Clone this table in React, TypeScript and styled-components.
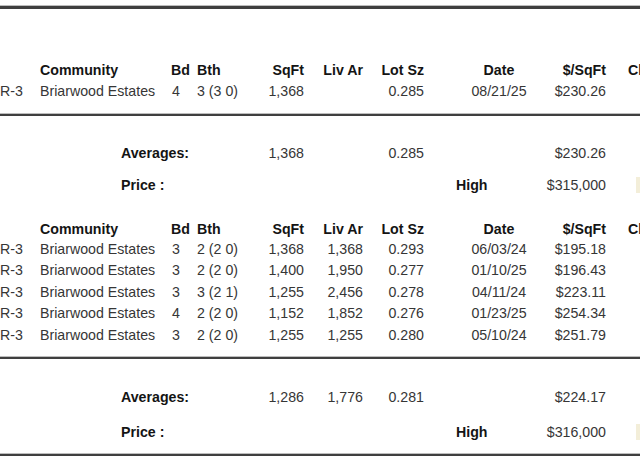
import React from "react";
import styled, { createGlobalStyle } from "styled-components";

const Global = createGlobalStyle`
  html, body { margin: 0; padding: 0; background: #fff; overflow: hidden; }
  body { width: 640px; height: 460px; font-family: "Liberation Sans", Arial, sans-serif; }
`;

const Page = styled.div`
  width: 640px;
  height: 460px;
  overflow: hidden;
  padding-top: 6px;
  box-sizing: border-box;
`;

const Section = styled.section<{ $pt: number; $pb: number; $border: number }>`
  border-top: ${(p) => p.$border}px solid #3f3f3f;
  padding-top: ${(p) => p.$pt}px;
  padding-bottom: ${(p) => p.$pb}px;
  box-shadow: 0 -1px 0 #bdbdbd;
`;

const Row = styled.div<{ $h: number; $mt?: number }>`
  display: grid;
  grid-template-columns: 40px 131px 26px 57px 50px 59px 61px 150px 32px 1fr;
  height: ${(p) => p.$h}px;
  align-items: center;
  margin-top: ${(p) => p.$mt ?? 0}px;
  font-size: 14.2px;
  color: #333;
  white-space: nowrap;
`;

const Cell = styled.div<{ $align?: "start" | "end" | "center"; $bold?: boolean; $col?: string; $pl?: number }>`
  justify-self: ${(p) => p.$align ?? "start"};
  grid-column: ${(p) => p.$col ?? "auto"};
  font-weight: ${(p) => (p.$bold ? 700 : 400)};
  color: ${(p) => (p.$bold ? "#141414" : "#363636")};
  padding-left: ${(p) => p.$pl ?? 0}px;
`;

const Tab = styled.div`
  grid-column: 10;
  justify-self: start;
  margin-left: 30px;
  width: 8px;
  height: 16px;
  background: #f3eed9;
`;

type Rec = {
  zone: string;
  bd: string;
  bth: string;
  sqft: string;
  liv: string;
  lot: string;
  date: string;
  pps: string;
};

const Header = ({ h }: { h: number }) => (
  <Row $h={h}>
    <Cell />
    <Cell $bold>Community</Cell>
    <Cell $bold>Bd</Cell>
    <Cell $bold>Bth</Cell>
    <Cell $bold $align="end">SqFt</Cell>
    <Cell $bold $align="end">Liv Ar</Cell>
    <Cell $bold $align="end">Lot Sz</Cell>
    <Cell $bold $align="center">Date</Cell>
    <Cell $bold $align="end">$/SqFt</Cell>
    <Cell $bold $pl={22}>Cl</Cell>
  </Row>
);

const DataRow = ({ r, h }: { r: Rec; h: number }) => (
  <Row $h={h}>
    <Cell>{r.zone}</Cell>
    <Cell>Briarwood Estates</Cell>
    <Cell $pl={1}>{r.bd}</Cell>
    <Cell>{r.bth}</Cell>
    <Cell $align="end">{r.sqft}</Cell>
    <Cell $align="end">{r.liv}</Cell>
    <Cell $align="end">{r.lot}</Cell>
    <Cell $align="center">{r.date}</Cell>
    <Cell $align="end">{r.pps}</Cell>
    <Cell />
  </Row>
);

const Averages = ({ sqft, liv, lot, pps }: { sqft: string; liv: string; lot: string; pps: string }) => (
  <Row $h={22}>
    <Cell />
    <Cell $bold $col="2 / 5" $pl={81}>Averages:</Cell>
    <Cell $align="end">{sqft}</Cell>
    <Cell $align="end">{liv}</Cell>
    <Cell $align="end">{lot}</Cell>
    <Cell />
    <Cell $align="end">{pps}</Cell>
  </Row>
);

const Price = ({ high, mt }: { high: string; mt: number }) => (
  <Row $h={22} $mt={mt}>
    <Cell />
    <Cell $bold $col="2 / 5" $pl={81}>Price :</Cell>
    <Cell $col="5 / 8" />
    <Cell $bold $pl={32}>High</Cell>
    <Cell $align="end">{high}</Cell>
    <Tab />
  </Row>
);

const comps: Rec[] = [
  { zone: "R-3", bd: "3", bth: "2 (2 0)", sqft: "1,368", liv: "1,368", lot: "0.293", date: "06/03/24", pps: "$195.18" },
  { zone: "R-3", bd: "3", bth: "2 (2 0)", sqft: "1,400", liv: "1,950", lot: "0.277", date: "01/10/25", pps: "$196.43" },
  { zone: "R-3", bd: "3", bth: "3 (2 1)", sqft: "1,255", liv: "2,456", lot: "0.278", date: "04/11/24", pps: "$223.11" },
  { zone: "R-3", bd: "4", bth: "2 (2 0)", sqft: "1,152", liv: "1,852", lot: "0.276", date: "01/23/25", pps: "$254.34" },
  { zone: "R-3", bd: "3", bth: "2 (2 0)", sqft: "1,255", liv: "1,255", lot: "0.280", date: "05/10/24", pps: "$251.79" },
];

const subject: Rec = { zone: "R-3", bd: "4", bth: "3 (3 0)", sqft: "1,368", liv: "", lot: "0.285", date: "08/21/25", pps: "$230.26" };

export default function App() {
  return (
    <>
      <Global />
      <Page>
        <Section $border={3} $pt={51} $pb={13}>
          <Header h={20} />
          <DataRow r={subject} h={21} />
        </Section>
        <Section $border={2} $pt={26} $pb={11.5}>
          <Averages sqft="1,368" liv="" lot="0.285" pps="$230.26" />
          <Price high="$315,000" mt={10} />
          <Row $h={0} $mt={23} />
          <Header h={19} />
          {comps.map((r, i) => (
            <DataRow key={i} r={r} h={21.5} />
          ))}
        </Section>
        <Section $border={2} $pt={27} $pb={11}>
          <Averages sqft="1,286" liv="1,776" lot="0.281" pps="$224.17" />
          <Price high="$316,000" mt={13} />
        </Section>
        <Section $border={2} $pt={0} $pb={0} />
      </Page>
    </>
  );
}
